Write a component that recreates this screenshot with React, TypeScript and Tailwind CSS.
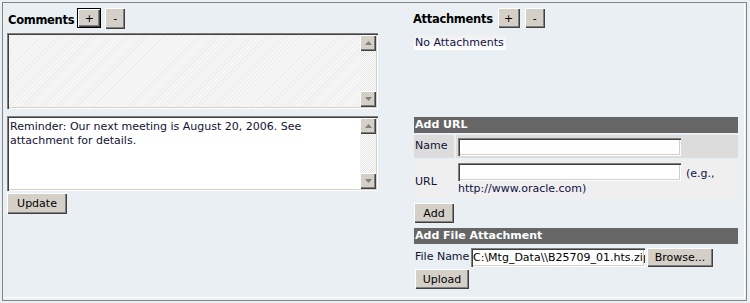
import React from 'react';

const FONT = "font-['DejaVu_Sans',Verdana,sans-serif]";

// classic raised button
const RAISED =
  'bg-[#d4d0c8] shadow-[inset_1px_1px_0_#ffffff,inset_-1px_-1px_0_#404040,inset_-2px_-2px_0_#808080] text-black text-[11px] leading-none flex items-center justify-center';

const SUNKEN =
  'shadow-[inset_1px_1px_0_#808080,inset_2px_2px_0_#404040,inset_-1px_-1px_0_#ffffff,inset_-2px_-2px_0_#d4d0c8]';

const Btn = ({
  label,
  className = '',
}: {
  label: string;
  className?: string;
}) => <button className={`${RAISED} ${className}`}>{label}</button>;

const Arrow = ({ down }: { down?: boolean }) => (
  <div className={`${RAISED} w-[16px] h-[16px]`}>
    <svg width="7" height="4" viewBox="0 0 7 4">
      {down ? (
        <polygon points="0,0 7,0 3.5,4" fill="#808080" />
      ) : (
        <polygon points="0,4 7,4 3.5,0" fill="#808080" />
      )}
    </svg>
  </div>
);

const ScrollBar = () => (
  <div className="w-[16px] h-full flex flex-col justify-between bg-[repeating-conic-gradient(#e4e4e4_0_25%,#ffffff_0_50%)] bg-[length:2px_2px]">
    <Arrow />
    <Arrow down />
  </div>
);

const TextBox = ({
  disabled,
  height,
  children,
}: {
  disabled?: boolean;
  height: string;
  children?: React.ReactNode;
}) => (
  <div
    className={`w-[371px] ${height} p-[2px] flex ${SUNKEN} ${
      disabled
        ? 'bg-[repeating-linear-gradient(135deg,#f6f6f6_0_2px,#eeeeee_2px_3px)]'
        : 'bg-white'
    }`}
  >
    <div className="flex-1 pl-[1px] pt-[2px] leading-[14px] text-[#111133]">{children}</div>
    <ScrollBar />
  </div>
);

const Bar = ({ title, className = '' }: { title: string; className?: string }) => (
  <div className={`w-[324px] ml-[1px] bg-[#666666] text-white font-bold pl-[1px] ${className}`}>
    {title}
  </div>
);

export default function App() {
  return (
    <div className={`w-[750px] h-[303px] bg-[#e9eff2] pt-[2px] pl-[2px] text-[11px] ${FONT}`}>
      <div className="w-[745px] h-[299px] border border-[#858585]">
        <div className="w-[742px] h-[295px] border-r border-b border-white flex pl-[4px] pt-[5px]">
          {/* Comments */}
          <div className="w-[371px] flex flex-col">
            <div className="flex items-center h-[21px]">
              <span className="font-bold text-black ml-[1px] mr-[3px] pt-[4px] text-[11.5px] tracking-[-0.3px]">
                Comments
              </span>
              <Btn label="+" className="w-[24px] h-[20px] border border-black self-start" />
              <Btn label="-" className="w-[20px] h-[21px] ml-[4px]" />
            </div>
            <div className="mt-[4px]">
              <TextBox disabled height="h-[76px]" />
            </div>
            <div className="mt-[7px]">
              <TextBox height="h-[75px]">
                Reminder: Our next meeting is August 20, 2006. See
                <br />
                attachment for details.
              </TextBox>
            </div>
            <Btn label="Update" className="w-[60px] h-[21px] mt-[2px]" />
          </div>

          {/* Attachments */}
          <div className="ml-[35px] w-[326px] flex flex-col">
            <div className="flex items-center h-[20px]">
              <span className="font-bold text-black mr-[5px] pt-[4px] text-[11.5px] tracking-[-0.3px]">
                Attachments
              </span>
              <Btn label="+" className="w-[22px] h-[20px]" />
              <Btn label="-" className="w-[20px] h-[20px] ml-[5px]" />
            </div>
            <div className="mt-[7px] ml-[1px] w-[92px] h-[15px] leading-[15px] pl-[1px] text-[#111144] bg-[linear-gradient(#f0f0f0,#ffffff)]">
              No Attachments
            </div>

            <Bar title="Add URL" className="mt-[67px] h-[16px] leading-[16px]" />

            <div className="ml-[1px] mt-[2px] w-[324px] h-[23px] flex gap-[2px]">
              <div className="w-[40px] bg-[#dcdcdc] flex items-center pl-[1px] text-[#111133]">
                Name
              </div>
              <div className="flex-1 bg-[#dcdcdc] flex items-center pl-[2px]">
                <div className={`w-[223px] h-[18px] bg-white ${SUNKEN}`} />
              </div>
            </div>

            <div className="ml-[1px] mt-[2px] w-[324px] h-[38px] flex gap-[2px]">
              <div className="w-[40px] bg-[#efefef] flex items-center pl-[1px] pt-[6px] text-[#111133]">
                URL
              </div>
              <div className="flex-1 bg-[#efefef] pl-[2px] pt-[3px] text-[#111144]">
                <div className="flex items-end h-[18px]">
                  <div className={`w-[223px] h-[18px] bg-white ${SUNKEN}`} />
                  <span className="ml-[5px] leading-[14px]">(e.g.,</span>
                </div>
                <div className="leading-[15px]">http://www.oracle.com)</div>
              </div>
            </div>

            <Btn label="Add" className="w-[40px] h-[20px] mt-[5px] ml-[1px]" />

            <Bar title="Add File Attachment" className="mt-[5px] h-[16px] leading-[16px]" />

            <div className="mt-[4px] ml-[2px] flex items-center h-[19px]">
              <span className="text-[#111133] w-[56px]">File Name</span>
              <div
                className={`w-[174px] h-[19px] bg-white ${SUNKEN} overflow-hidden whitespace-nowrap leading-[19px] pl-[2px] text-black`}
              >
                C:\Mtg_Data\\B25709_01.hts.zip
              </div>
              <Btn label="Browse..." className="w-[66px] h-[19px] ml-[2px]" />
            </div>

            <Btn label="Upload" className="w-[54px] h-[20px] mt-[2px] ml-[2px]" />
          </div>
        </div>
      </div>
    </div>
  );
}
